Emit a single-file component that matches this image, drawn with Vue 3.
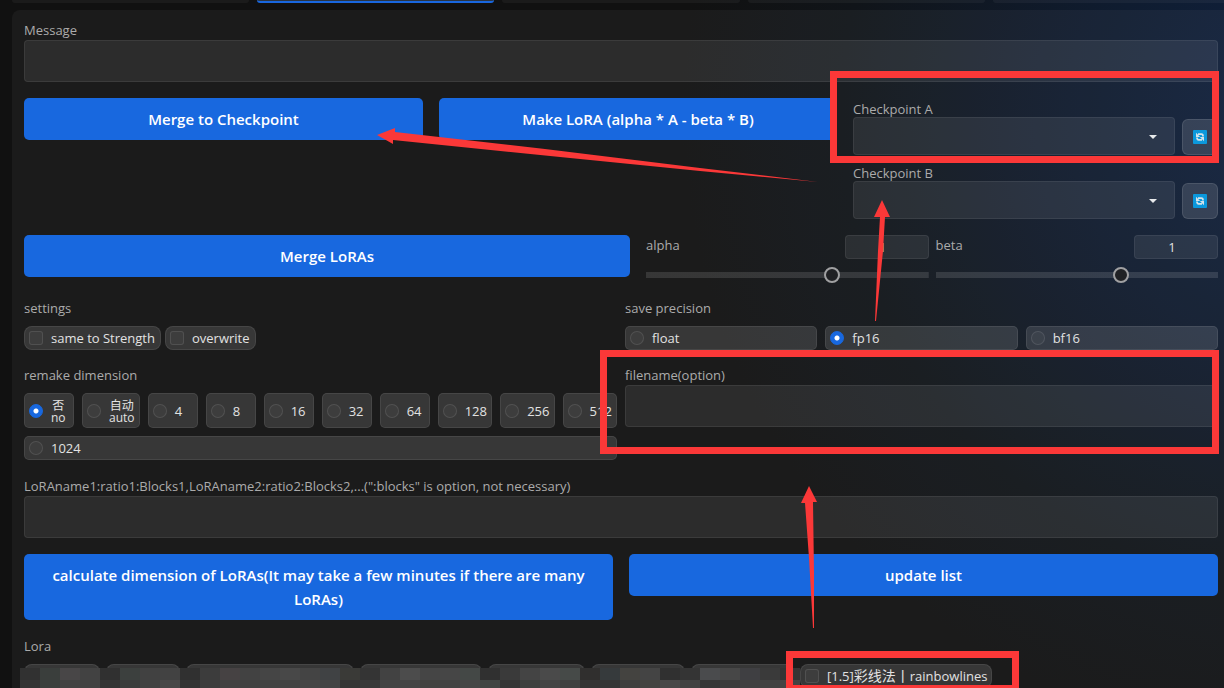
<script setup>
import { ref } from 'vue'

const tabs = [false, true, false, false, false]
const checkpoints = ['A', 'B']
const sliders = [
  { id: 'alpha', value: ref(1) },
  { id: 'beta', value: ref(1) },
]
const settings = ['same to Strength', 'overwrite']
const precisions = ['float', 'fp16', 'bf16']
const precision = ref('fp16')
const dimensions = [
  { value: 'no', zh: '否' },
  { value: 'auto', zh: '自动' },
  ...['4', '8', '16', '32', '64', '128', '256', '512', '1024'].map((value) => ({ value })),
]
const dimension = ref('no')

const hiddenLoras = [76, 74, 168, 122, 97, 94, 103]
const mosaicTop =
  '313131 3a3e3c 484647 424242 303030 3c403e 414141 424242 303030 3c3c3c 464243 424242 454545 484848 444444 404244 3a3a37 343434 424242 4c4c4c 454545 464646 444846 303030 3a3a3a 444444 4a4a4a 464a48 302f2e 363a3c 444340 444444 303030 343434 4a4b4d 474747 3f3f42 3a3a3a 343434'.split(' ')
const mosaicBottom =
  '343434 3b3f3d 424242 424242 343434 3b3b3b 424242 484848 333333 3d3d3d 414141 404040 424242 424242 464646 444444 343434 393939 444444 444444 434240 424242 464646 414543 343434 3c403e 444444 404040 343434 343434 3e3e3e 444340 484848 424242 353535 3b3b3b 404040 424242 444444'.split(' ')
const tiles = [...mosaicTop, ...mosaicBottom]
</script>

<template>
  <main class="page">
    <nav class="tabs" aria-label="Sections">
      <span v-for="(active, i) in tabs" :key="i" class="tab" :class="{ active }"></span>
    </nav>

    <section class="panel">
      <div class="field">
        <label class="label" for="message">Message</label>
        <input id="message" class="box" type="text" />
      </div>

      <div class="row merge">
        <button class="primary" type="button">Merge to Checkpoint</button>
        <button class="primary" type="button">Make LoRA (alpha * A - beta * B)</button>
        <div class="checkpoints">
          <div v-for="c in checkpoints" :key="c" class="field checkpoint">
            <label class="label" :for="'checkpoint' + c">Checkpoint {{ c }}</label>
            <div class="picker">
              <div class="drop">
                <select :id="'checkpoint' + c" class="box select"></select>
                <svg class="caret" viewBox="0 0 8 4" aria-hidden="true"><path d="M0 0h8L4 4z" /></svg>
              </div>
              <button class="refresh" type="button" :aria-label="'Refresh checkpoint ' + c">
                <svg viewBox="0 0 14 14" aria-hidden="true">
                  <rect width="14" height="14" rx="1" fill="#0b98dc" />
                  <path d="M5 4.2H8.4Q10 4.2 10 6.4M9 9.8H5.6Q4 9.8 4 7.6" fill="none" stroke="#d3e2ea" stroke-width="1.8" />
                  <path d="M3 2.8v4.1h4.1zM11 11.2V7.1H6.9z" fill="#d3e2ea" />
                </svg>
              </button>
            </div>
            <div v-if="c === 'A'" class="mark mark-checkpoint"></div>
          </div>
        </div>
      </div>

      <div class="row loras">
        <button class="primary" type="button">Merge LoRAs</button>
        <div class="sliders">
          <div v-for="s in sliders" :key="s.id" class="slider">
            <div class="slider-head">
              <label :for="s.id">{{ s.id }}</label>
              <input v-model="s.value.value" class="box number" type="text" :aria-label="s.id + ' value'" />
            </div>
            <input :id="s.id" v-model="s.value.value" class="range" type="range" min="-1" max="2" step="0.1" />
          </div>
        </div>
      </div>

      <div class="row halves">
        <fieldset>
          <legend>settings</legend>
          <div class="chips tight">
            <label v-for="s in settings" :key="s" class="chip round">
              <input type="checkbox" /><span>{{ s }}</span>
            </label>
          </div>
        </fieldset>
        <fieldset>
          <legend>save precision</legend>
          <div class="chips equal">
            <label v-for="p in precisions" :key="p" class="chip">
              <input v-model="precision" type="radio" name="precision" :value="p" /><span>{{ p }}</span>
            </label>
          </div>
        </fieldset>
      </div>

      <div class="row halves dimension">
        <fieldset>
          <legend>remake dimension</legend>
          <div class="chips grow">
            <label v-for="d in dimensions" :key="d.value" class="chip">
              <input v-model="dimension" type="radio" name="dimension" :value="d.value" />
              <span :class="{ stacked: d.zh }"><span v-if="d.zh" class="zh">{{ d.zh }}</span>{{ d.value }}</span>
            </label>
          </div>
        </fieldset>
        <div class="field filename">
          <label class="label" for="filename">filename(option)</label>
          <input id="filename" class="box" type="text" />
          <div class="mark mark-filename"></div>
        </div>
      </div>

      <div class="field">
        <label class="label" for="blocks">LoRAname1:ratio1:Blocks1,LoRAname2:ratio2:Blocks2,...(":blocks" is option, not necessary)</label>
        <input id="blocks" class="box" type="text" />
      </div>

      <div class="row actions">
        <button class="primary" type="button">calculate dimension of LoRAs(It may take a few minutes if there are many LoRAs)</button>
        <button class="primary" type="button">update list</button>
      </div>

      <fieldset class="lora">
        <legend>Lora</legend>
        <div class="lora-list">
          <span v-for="(w, i) in hiddenLoras" :key="i" class="chip round covered" :style="{ width: w + 'px' }"></span>
          <label class="chip round visible">
            <input type="checkbox" /><span>[1.5]<span class="cjk">彩线法丨</span>rainbowlines</span>
            <span class="mark mark-lora"></span>
          </label>
          <div class="mosaic" aria-hidden="true">
            <i v-for="(t, i) in tiles" :key="i" :style="{ background: '#' + t }"></i>
          </div>
        </div>
      </fieldset>
    </section>

    <svg class="arrows" viewBox="0 0 1224 688" preserveAspectRatio="none" aria-hidden="true">
      <path d="M377 135l18-7v4l150 17 155 19 118 14-118-11-140-14-167-17v4z" />
      <path d="M882 200l8 17h-5l-2 34-7 70h-1l3-70 2-34h-6z" />
      <path d="M809 486l8 16h-4l1 70v56h-1l-4-70-4-55h-4z" />
    </svg>
  </main>
</template>

<style>
html,
body {
  margin: 0;
  background: #111;
}
</style>

<style scoped>
* {
  box-sizing: border-box;
}
.page {
  position: relative;
  height: 100vh;
  overflow: hidden;
  background: radial-gradient(circle at 108% 16%, #102242 0, #0f1c30 220px, #101419 480px, #111 640px);
  color: #e2e2e2;
  font: 13px/20px "Open Sans", "Noto Sans CJK SC", sans-serif;
  display: flex;
  flex-direction: column;
}
button,
input,
select {
  font: inherit;
  color: inherit;
  margin: 0;
}
.tabs {
  display: flex;
  gap: 8px;
  flex: none;
  height: 3px;
  margin: 0 -6px 7px 12px;
}
.tab {
  flex: 1;
  background: rgba(255, 255, 255, 0.045);
  border-radius: 0 0 4px 4px;
}
.tab.active {
  background: #2c3440;
  border-bottom: 2px solid #1967df;
}
.panel {
  flex: 1 0 auto;
  margin-left: 12px;
  padding: 10px 6px 0 12px;
  background: rgba(255, 255, 255, 0.043);
  border-radius: 8px 0 0 0;
  display: flex;
  flex-direction: column;
  gap: 16px;
}
.field {
  display: flex;
  flex-direction: column;
  position: relative;
}
.label,
legend,
.slider-head label {
  color: #ababab;
  line-height: 20px;
}
.box {
  width: 100%;
  height: 42px;
  border: 1px solid rgba(255, 255, 255, 0.07);
  border-radius: 4px;
  background: rgba(255, 255, 255, 0.078);
  padding: 0 8px;
}
.row {
  display: grid;
  align-items: start;
}
.primary {
  min-height: 42px;
  padding: 9px 16px;
  border: 0;
  border-radius: 5px;
  background: #1868df;
  color: #fff;
  font-size: 15px;
  font-weight: 600;
  line-height: 24px;
}
.merge {
  grid-template-columns: 399fr 398fr 365fr;
  gap: 16px;
}
.checkpoints {
  display: flex;
  flex-direction: column;
  gap: 6px;
  padding-top: 1px;
}
.checkpoint .label {
  margin-bottom: -2px;
}
.checkpoint .label {
  line-height: 20px;
}
.filename .label {
  line-height: 19px;
}
.picker {
  display: flex;
  align-items: flex-end;
  gap: 7px;
  padding-top: 0;
}
.checkpoint + .checkpoint {
  padding-top: 2px;
}
.drop {
  position: relative;
  flex: 1;
}
.select {
  display: block;
  height: 38px;
  appearance: none;
}
.caret {
  position: absolute;
  right: 18px;
  top: 18px;
  width: 8px;
  height: 4px;
  fill: #e8eaec;
}
.refresh {
  width: 36px;
  height: 36px;
  padding: 0;
  border: 1px solid rgba(255, 255, 255, 0.1);
  border-radius: 6px;
  background: rgba(255, 255, 255, 0.13);
  display: grid;
  place-items: center;
}
.refresh svg {
  width: 14px;
  height: 14px;
}
.loras {
  grid-template-columns: 606fr 572fr;
  gap: 16px;
}
.sliders {
  display: grid;
  grid-template-columns: 1fr 1fr;
  gap: 7px;
}
.slider-head {
  display: flex;
  justify-content: space-between;
  align-items: flex-start;
  height: 32px;
}
.number {
  width: 84px;
  height: 24px;
  padding: 0 16px 0 8px;
  text-align: center;
}
.range {
  display: block;
  width: 100%;
  height: 16px;
  appearance: none;
  background: linear-gradient(rgba(255, 255, 255, 0.12), rgba(255, 255, 255, 0.12)) center / 100% 6px no-repeat;
  border-radius: 3px;
}
.range::-webkit-slider-thumb {
  appearance: none;
  width: 16px;
  height: 16px;
  border: 2px solid #a0a0a2;
  border-radius: 50%;
  background: #202124;
}
.halves {
  grid-template-columns: 1fr 1fr;
  gap: 8px;
}
.actions {
  grid-template-columns: 1fr 1fr;
  gap: 16px;
}
fieldset {
  min-width: 0;
  margin: 0;
  padding: 0;
  border: 0;
}
legend {
  padding: 0;
  margin-bottom: 8px;
}
.halves legend {
  line-height: 19px;
}
.chips {
  display: flex;
  flex-wrap: wrap;
  gap: 8px;
}
.chips.tight {
  gap: 4px;
}
.equal .chip {
  flex: 1;
}
.chip {
  display: flex;
  align-items: center;
  gap: 8px;
  min-height: 24px;
  padding: 0 4px;
  border: 1px solid rgba(255, 255, 255, 0.08);
  border-radius: 5px;
  background: rgba(255, 255, 255, 0.125);
  line-height: 20px;
  white-space: nowrap;
}
.chip.round {
  border-radius: 8px;
}
.tight .chip {
  padding-right: 5px;
}
.grow .chip {
  flex: 1 0 auto;
  min-width: 50px;
}
.chip input {
  appearance: none;
  flex: none;
  width: 14px;
  height: 14px;
  border: 1px solid rgba(255, 255, 255, 0.1);
  border-radius: 3px;
  background: rgba(255, 255, 255, 0.03);
}
.chip input[type='radio'] {
  border-radius: 50%;
}
.chip input:checked {
  border-color: #1868df;
  background: radial-gradient(circle, #fff 0 2px, #1868df 3px);
}
.stacked {
  font-size: 12px;
  line-height: 12px;
  text-align: center;
  padding: 6px 0 3px;
}
.zh {
  display: block;
}
.cjk {
  font-size: 14px;
}
.lora-list {
  position: relative;
  display: flex;
  gap: 6px;
}
.covered {
  flex: none;
}
.visible {
  position: relative;
}
.mosaic {
  position: absolute;
  left: -4px;
  top: 4px;
  display: grid;
  grid-template-columns: repeat(39, 20px);
  grid-template-rows: 12px 20px;
}
.mark {
  position: absolute;
  border: 7px solid #fb3838;
  pointer-events: none;
  z-index: 2;
}
.mark-checkpoint {
  inset: -28px -1px -8px -23px;
}
.mark-filename {
  inset: -16px -1px -27px -25px;
}
.mark-lora {
  inset: -14px -28px -5px -15px;
}
.arrows {
  position: absolute;
  inset: 0;
  width: 100%;
  height: 100%;
  fill: #fb3838;
  pointer-events: none;
}
</style>
